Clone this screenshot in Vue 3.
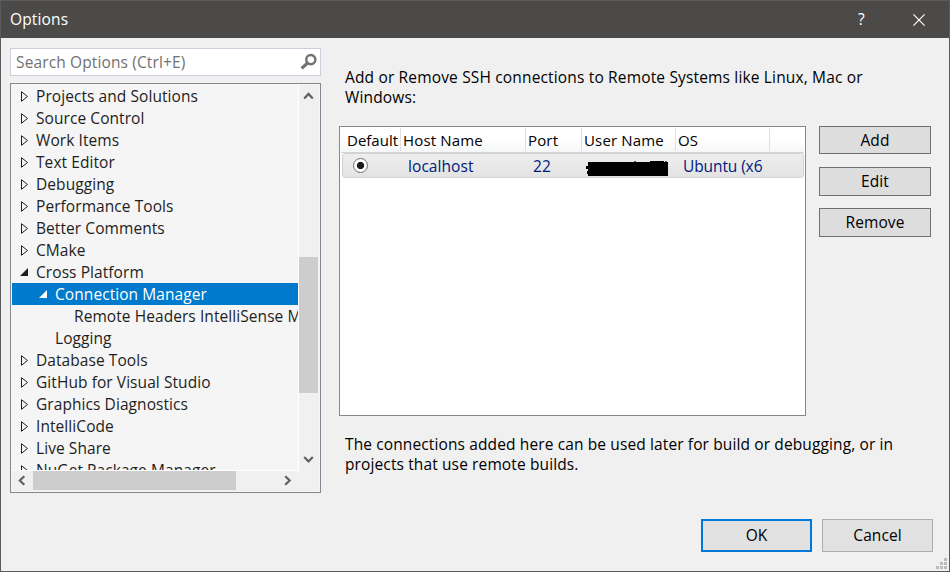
<script setup>
const items = [
  { label: 'Projects and Solutions', level: 0, state: 'closed' },
  { label: 'Source Control', level: 0, state: 'closed' },
  { label: 'Work Items', level: 0, state: 'closed' },
  { label: 'Text Editor', level: 0, state: 'closed' },
  { label: 'Debugging', level: 0, state: 'closed' },
  { label: 'Performance Tools', level: 0, state: 'closed' },
  { label: 'Better Comments', level: 0, state: 'closed' },
  { label: 'CMake', level: 0, state: 'closed' },
  { label: 'Cross Platform', level: 0, state: 'open' },
  { label: 'Connection Manager', level: 1, state: 'open', selected: true },
  { label: 'Remote Headers IntelliSense M', level: 2, state: 'leaf' },
  { label: 'Logging', level: 1, state: 'leaf' },
  { label: 'Database Tools', level: 0, state: 'closed' },
  { label: 'GitHub for Visual Studio', level: 0, state: 'closed' },
  { label: 'Graphics Diagnostics', level: 0, state: 'closed' },
  { label: 'IntelliCode', level: 0, state: 'closed' },
  { label: 'Live Share', level: 0, state: 'closed' },
  { label: 'NuGet Package Manager', level: 0, state: 'closed' },
]
const columns = ['Default', 'Host Name', 'Port', 'User Name', 'OS', '']
const actions = ['Add', 'Edit', 'Remove']
</script>

<template>
  <div class="window">
    <header class="titlebar">
      <span class="title">Options</span>
      <span class="help">?</span>
      <svg class="close" width="12" height="12" viewBox="0 0 12 12"><path d="M.4.4 11.6 11.6M11.6.4.4 11.6" /></svg>
    </header>

    <main class="body">
      <aside class="side">
        <div class="search">
          <span>Search Options (Ctrl+E)</span>
          <svg width="18" height="18" viewBox="0 0 18 18">
            <circle cx="10.8" cy="6.6" r="4.6" fill="none" stroke="#717171" stroke-width="2.4" />
            <path d="M7.6 10 1.6 15.4" stroke="#717171" stroke-width="3.2" />
          </svg>
        </div>

        <div class="tree">
          <div class="rows">
            <div v-for="item in items" :key="item.label" class="row" :class="['level' + item.level, { selected: item.selected }]">
              <svg class="arrow" width="10" height="12" viewBox="0 0 10 12">
                <path v-if="item.state === 'closed'" class="hollow" d="M1.5 1.7V11.3L7.5 6.5Z" />
                <path v-if="item.state === 'open'" class="solid" d="M8 2V10H0Z" />
              </svg>
              <span>{{ item.label }}</span>
            </div>
          </div>
          <div class="vbar">
            <svg class="chev" width="20" height="22" viewBox="0 0 20 22"><path d="M5.2 13.4 9.5 8.9 13.8 13.4" /></svg>
            <div class="vthumb"></div>
            <svg class="chev" width="20" height="22" viewBox="0 0 20 22"><path d="M5.2 8 9.5 12.5 13.8 8" /></svg>
          </div>
          <div class="hbar">
            <svg class="chev" width="21" height="19" viewBox="0 0 21 19"><path d="M12.3 5.2 7.8 9.5 12.3 13.8" /></svg>
            <div class="hthumb"></div>
            <svg class="chev" width="21" height="19" viewBox="0 0 21 19"><path d="M8.2 5.2 12.7 9.5 8.2 13.8" /></svg>
          </div>
        </div>
      </aside>

      <section class="content">
        <p class="intro">Add or Remove SSH connections to Remote Systems like Linux, Mac or<br />Windows:</p>
        <div class="connections">
          <div class="table">
            <div class="grid head">
              <span v-for="column in columns" :key="column">{{ column }}</span>
            </div>
            <div class="grid entry">
              <span class="radio"><i></i></span>
              <span class="host">localhost</span>
              <span class="port">22</span>
              <svg class="redacted" width="84" height="20" viewBox="0 0 84 20">
                <path d="M2 5H64V4H78V5H82V19H2V17H1V14H2V12H0V9H2Z" />
                <path class="trace" d="M48 4h2v1h-2zM79 4h2v1h-2z" />
              </svg>
              <span class="os">Ubuntu (x6</span>
            </div>
          </div>
          <div class="actions">
            <button v-for="action in actions" :key="action">{{ action }}</button>
          </div>
        </div>
        <p class="note">The connections added here can be used later for build or debugging, or in<br />projects that use remote builds.</p>
        <footer class="footer">
          <button class="ok">OK</button>
          <button>Cancel</button>
        </footer>
      </section>
    </main>
    <svg class="grip" width="11" height="11" viewBox="0 0 11 11">
      <path d="M8 0h3v3H8zM4 4h3v3H4zM8 4h3v3H8zM0 8h3v3H0zM4 8h3v3H4zM8 8h3v3H8z" />
    </svg>
  </div>
</template>

<style>
body { margin: 0; overflow: hidden; }
</style>

<style scoped>
* { box-sizing: border-box; }
.window {
  position: relative;
  width: 950px;
  height: 572px;
  border: 1px solid #5b5b5b;
  background: #f0f0f0;
  font: 15.5px/20px "Open Sans", "Noto Sans", sans-serif;
  letter-spacing: 0.07px;
  color: #000;
}
.titlebar { display: flex; align-items: center; height: 37px; padding: 0 24px 0 9px; background: #4b4a48; color: #fff; }
.title { flex: 1; padding-bottom: 1px; letter-spacing: 0.15px; }
.help { width: 9px; margin-right: 46px; padding-bottom: 1px; }
.close { fill: none; stroke: #fff; stroke-width: 1.2; }
.body { display: flex; padding: 10px 0 0 9px; }
.side { width: 311px; }
.search { display: flex; align-items: center; justify-content: space-between; height: 28px; padding: 0 2px 0 5px; border: 1px solid #cccedb; background: #fff; color: #717171; letter-spacing: 0.13px; }
.tree { display: grid; grid-template: 386px 20px / 287px 20px; height: 410px; margin-top: 7px; padding: 1px; border: 1px solid #828790; background: #f5f5f5; }
.rows { overflow: hidden; border-right: 1px solid #fff; border-bottom: 1px solid #fff; color: #1e1e1e; }
.row { display: flex; align-items: center; height: 22px; padding-left: 8px; white-space: nowrap; }
.row .arrow { flex: none; margin-right: 6px; }
.level1 { padding-left: 27px; }
.level2 { padding-left: 46px; }
.hollow { fill: none; stroke: #1e1e1e; stroke-width: 1; }
.solid { fill: #1e1e1e; }
.selected { background: #007acc; color: #fff; }
.selected .solid { fill: #fff; }
.vbar { display: flex; flex-direction: column; background: #f0f0f0; }
.vthumb { width: 19px; height: 136px; margin: 150px 0 auto; background: #cdcdcd; }
.hbar { grid-column: 1 / 3; display: flex; background: #f0f0f0; }
.hthumb { width: 203px; height: 19px; margin-right: 41px; background: #cdcdcd; }
.chev { flex: none; fill: none; stroke: #606060; stroke-width: 2.2; }
.content { flex: 1; padding: 19px 0 0 19px; }
p { margin: 0; padding-left: 5px; white-space: nowrap; letter-spacing: 0.12px; }
.intro { letter-spacing: 0.16px; }
.connections { display: flex; margin-top: 19px; margin-left: -1px; }
.table { width: 467px; height: 290px; padding: 1px; border: 1px solid #828790; background: #fff; }
.grid { display: grid; grid-template-columns: 60px 125px 56px 94px 94px 34px; white-space: nowrap; }
.head { height: 25px; padding-bottom: 1px; background: linear-gradient(#fff 40%, #f6f7f8); border-bottom: 1px solid #d5d5d5; font-size: 15px; letter-spacing: 0.15px; }
.head span { padding: 2px 0 0 2px; border-right: 1px solid #dedfe1; }
.head span:first-child { padding-left: 6px; letter-spacing: 0; }
.head span:last-child { border: 0; }
.entry { height: 25px; margin: 0 0 0 1px; border: 1px solid #d2d2d2; border-radius: 3px; background: linear-gradient(#eee, #e3e3e3); color: #001a7b; }
.entry span { padding-top: 2px; }
.radio i { display: block; width: 15px; height: 15px; margin: 2px 0 0 10px; border: 1px solid #707070; border-radius: 50%; background: radial-gradient(circle, #1b1b1b 3.2px, #fff 4.1px); }
.entry .radio { padding-top: 2px; }
.host { padding-left: 5px; }
.port { padding-left: 5px; }
.redacted { margin: 3px 0 0 2px; }
.trace { fill: #2f4f9c; }
.entry .os { width: 87px; padding-left: 5px; letter-spacing: -0.1px; }
.actions { display: flex; flex-direction: column; gap: 12px; margin-left: 13px; }
button { display: flex; align-items: center; justify-content: center; width: 112px; height: 29px; padding: 0 0 1px; border: 1px solid #707070; background: #ddd; font: inherit; letter-spacing: inherit; color: #000; }
.actions button:first-child { height: 28px; margin-bottom: 1px; }
.note { margin-top: 18px; }
.footer { display: flex; gap: 10px; margin: 45px 0 0 361px; }
.footer button { width: 111px; height: 33px; border-color: #adadad; background: #e1e1e1; }
.footer .ok { border: 2px solid #0078d7; }
.grip { position: absolute; right: 2px; bottom: 2px; fill: #bcbcbc; }
</style>
